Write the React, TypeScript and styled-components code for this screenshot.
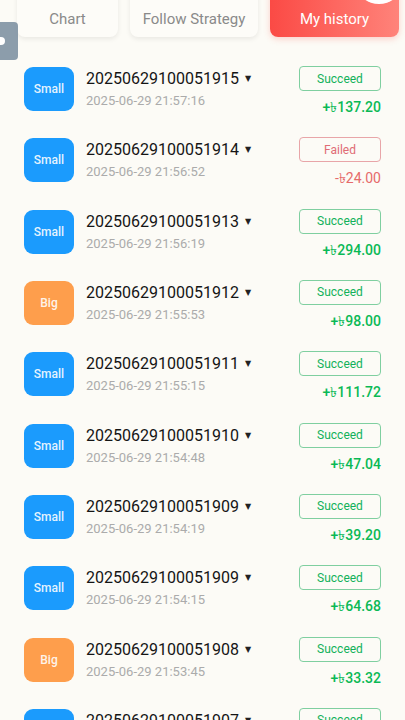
import * as React from "react";
import styled, { createGlobalStyle } from "styled-components";

const GlobalStyle = createGlobalStyle`
  html, body {
    margin: 0;
    padding: 0;
    background: #fcfbf6;
    font-family: Roboto, "Noto Sans", "DejaVu Sans", sans-serif;
  }
`;

const Page = styled.div`
  position: relative;
  width: 405px;
  height: 720px;
  overflow: hidden;
  background: #fcfbf6;
`;

const Tabs = styled.div`
  display: grid;
  grid-template-columns: 101px 128px 129px;
  gap: 12px;
  padding: 0 6px 0 17px;
  margin-top: -10px;
  height: 47px;
`;

const Tab = styled.div<{ $active?: boolean }>`
  display: flex;
  align-items: center;
  justify-content: center;
  padding-top: 10px;
  border-radius: 0 0 8px 8px;
  font-size: 15px;
  color: ${(p) => (p.$active ? "#fff" : "#8a8a8a")};
  background: ${(p) =>
    p.$active ? "linear-gradient(90deg, #fb4a45 0%, #ff837a 100%)" : "#fdfcf8"};
  box-shadow: ${(p) =>
    p.$active ? "0 2px 6px rgba(251, 80, 70, 0.25)" : "0 2px 5px rgba(0, 0, 0, 0.08)"};
`;

const Bubble = styled.div`
  position: absolute;
  top: -30px;
  right: 5px;
  width: 42px;
  height: 34px;
  border-radius: 50%;
  background: #fff;
`;

const SideHandle = styled.div`
  position: absolute;
  left: 0;
  top: 22px;
  width: 18px;
  height: 38px;
  border-radius: 0 4px 4px 0;
  background: rgba(120, 140, 158, 0.85);

  &::after {
    content: "";
    position: absolute;
    left: -3px;
    top: 15px;
    width: 8px;
    height: 8px;
    border-radius: 50%;
    background: #fff;
  }
`;

const List = styled.div`
  display: flex;
  flex-direction: column;
  padding-top: 30px;
`;

const Row = styled.div`
  display: flex;
  align-items: flex-start;
  height: 71.33px;
  flex-shrink: 0;
  padding: 0 24px;
  box-sizing: border-box;
`;

const Badge = styled.div<{ $big?: boolean }>`
  width: 50px;
  height: 44px;
  border-radius: 9px;
  display: flex;
  align-items: center;
  justify-content: center;
  font-size: 12px;
  font-weight: 500;
  color: rgba(255, 255, 255, 0.9);
  background: ${(p) => (p.$big ? "#fe9e4c" : "#1b9bfd")};
  flex-shrink: 0;
`;

const Info = styled.div`
  display: flex;
  flex-direction: column;
  margin-left: 12px;
  flex: 1;
  padding-top: 1px;
`;

const Order = styled.div`
  font-size: 16px;
  color: #151515;
  line-height: 22px;
  display: flex;
  align-items: center;
`;

const Caret = styled.span`
  font-size: 8px;
  margin-left: 6px;
  color: #222;
`;

const Time = styled.div`
  font-size: 13px;
  color: #ababab;
  line-height: 18px;
  margin-top: 2px;
`;

const Right = styled.div`
  display: flex;
  flex-direction: column;
  align-items: flex-end;
  margin-top: -1px;
`;

const Status = styled.div<{ $fail?: boolean }>`
  width: 82px;
  height: 25px;
  box-sizing: border-box;
  border-radius: 4px;
  border: 1px solid ${(p) => (p.$fail ? "#e8a5a8" : "#7fcfa0")};
  color: ${(p) => (p.$fail ? "#e06c75" : "#12b15a")};
  font-size: 12px;
  display: flex;
  align-items: center;
  justify-content: center;
`;

const Amount = styled.div<{ $fail?: boolean }>`
  margin-top: 5px;
  font-size: 14px;
  font-weight: ${(p) => (p.$fail ? 400 : 500)};
  color: ${(p) => (p.$fail ? "#e66a6a" : "#0ab955")};
`;

type Item = {
  id: string;
  time: string;
  big?: boolean;
  fail?: boolean;
  amount: string;
};

const items: Item[] = [
  { id: "20250629100051915", time: "2025-06-29 21:57:16", amount: "+৳137.20" },
  { id: "20250629100051914", time: "2025-06-29 21:56:52", fail: true, amount: "-৳24.00" },
  { id: "20250629100051913", time: "2025-06-29 21:56:19", amount: "+৳294.00" },
  { id: "20250629100051912", time: "2025-06-29 21:55:53", big: true, amount: "+৳98.00" },
  { id: "20250629100051911", time: "2025-06-29 21:55:15", amount: "+৳111.72" },
  { id: "20250629100051910", time: "2025-06-29 21:54:48", amount: "+৳47.04" },
  { id: "20250629100051909", time: "2025-06-29 21:54:19", amount: "+৳39.20" },
  { id: "20250629100051909", time: "2025-06-29 21:54:15", amount: "+৳64.68" },
  { id: "20250629100051908", time: "2025-06-29 21:53:45", big: true, amount: "+৳33.32" },
  { id: "20250629100051907", time: "2025-06-29 21:53:12", amount: "+৳52.00" },
];

export default function App() {
  return (
    <Page>
      <GlobalStyle />
      <Tabs>
        <Tab>Chart</Tab>
        <Tab>Follow Strategy</Tab>
        <Tab $active>My history</Tab>
      </Tabs>
      <Bubble />
      <SideHandle />
      <List>
        {items.map((it, i) => (
          <Row key={i}>
            <Badge $big={it.big}>{it.big ? "Big" : "Small"}</Badge>
            <Info>
              <Order>
                {it.id}
                <Caret>▼</Caret>
              </Order>
              <Time>{it.time}</Time>
            </Info>
            <Right>
              <Status $fail={it.fail}>{it.fail ? "Failed" : "Succeed"}</Status>
              <Amount $fail={it.fail}>{it.amount}</Amount>
            </Right>
          </Row>
        ))}
      </List>
    </Page>
  );
}
